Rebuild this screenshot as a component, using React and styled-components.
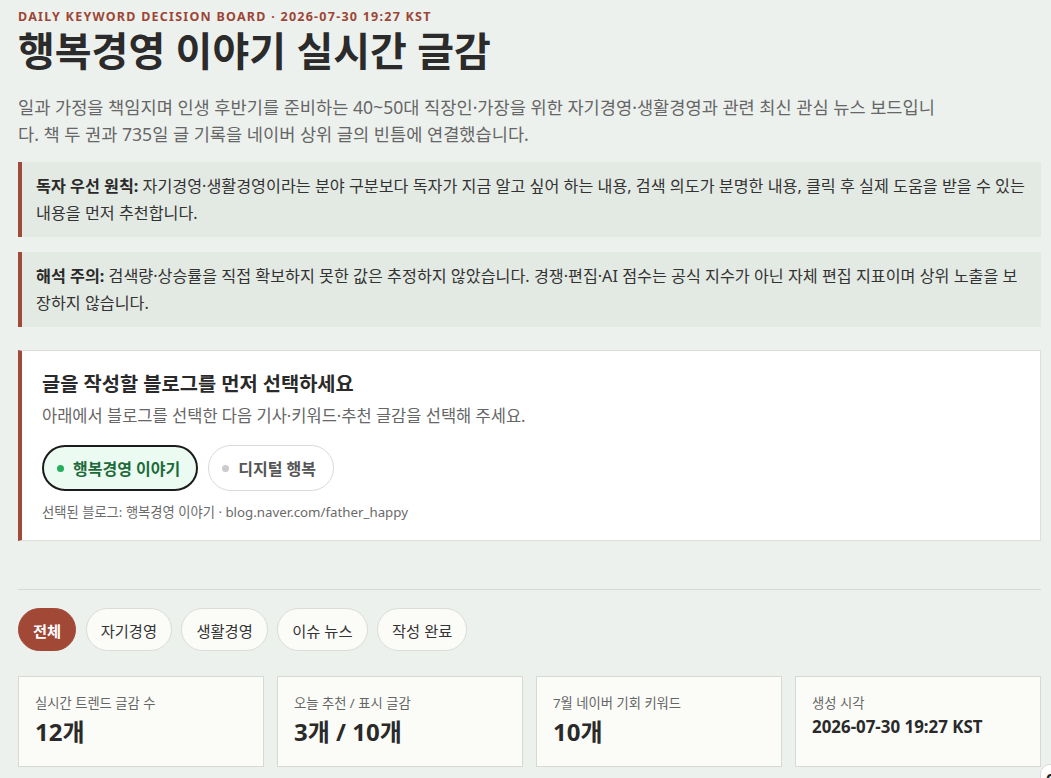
import React from "react";
import styled, { createGlobalStyle } from "styled-components";

const Global = createGlobalStyle`
  html, body { margin: 0; padding: 0; background: #edf1ee; }
  body {
    font-family: "Noto Sans", "Noto Sans CJK KR", sans-serif;
    color: #2a2a2a;
    overflow: hidden;
  }
  * { box-sizing: border-box; }
`;

const Page = styled.main`
  padding: 8px 10px 0 18px;
  display: flex;
  flex-direction: column;
`;

const Eyebrow = styled.div`
  font-size: 12.5px;
  font-weight: 700;
  letter-spacing: 0.1em;
  color: #9c4636;
  line-height: 18px;
`;

const Title = styled.h1`
  margin: 0;
  font-size: 40px;
  font-weight: 700;
  line-height: 50px;
  color: #2b2b2b;
`;

const Lead = styled.p`
  margin: 18px 0 0;
  max-width: 920px;
  font-size: 17.6px;
  line-height: 27px;
  color: #666;
`;

const Notes = styled.div`
  display: flex;
  flex-direction: column;
  gap: 15px;
  margin-top: 14px;
`;

const Callout = styled.div`
  background: #e3e9e3;
  border-left: 4px solid #a04a3a;
  padding: 11px 14px 11px 14px;
  font-size: 16.2px;
  line-height: 26.5px;
  color: #333;
  strong { font-weight: 700; color: #2a2a2a; }
`;

const SelectCard = styled.section`
  margin-top: 23px;
  background: #fff;
  border: 1px solid #dcdfdb;
  border-left: 4px solid #a04a3a;
  padding: 19px 22px 18px 20px;
`;

const CardTitle = styled.h2`
  margin: 0;
  font-size: 19.8px;
  font-weight: 700;
  line-height: 28px;
  color: #2a2a2a;
`;

const CardSub = styled.p`
  margin: 7px 0 0;
  font-size: 16.5px;
  line-height: 22px;
  color: #666;
`;

const BlogRow = styled.div`
  display: flex;
  gap: 10px;
  margin-top: 18px;
`;

const BlogChip = styled.button`
  display: inline-flex;
  align-items: center;
  gap: 9px;
  height: 46px;
  padding: ${(p) => (p.$active ? "0 16px 0 13px" : "0 17px 0 13px")};
  border-radius: 23px;
  font-family: inherit;
  font-size: 16px;
  font-weight: 700;
  cursor: pointer;
  background: ${(p) => (p.$active ? "#ebfbf2" : "#fff")};
  border: ${(p) => (p.$active ? "2px solid #1b1b1b" : "1px solid #d9d9d9")};
  color: ${(p) => (p.$active ? "#1f6a3b" : "#555")};
`;

const Dot = styled.span`
  width: 7px;
  height: 7px;
  border-radius: 50%;
  background: ${(p) => (p.$active ? "#22b05c" : "#cbcbcb")};
`;

const Foot = styled.p`
  margin: 11px 0 0;
  font-size: 13.3px;
  line-height: 20px;
  color: #6a6a6a;
`;

const Divider = styled.hr`
  margin: 48px 0 0;
  border: 0;
  border-top: 1px solid #d6dad6;
`;

const Filters = styled.div`
  display: flex;
  gap: 9.5px;
  margin-top: 18px;
`;

const FilterChip = styled.button`
  height: 43px;
  padding: 0 14px;
  border-radius: 22px;
  font-family: inherit;
  font-size: 15.3px;
  font-weight: ${(p) => (p.$active ? 700 : 400)};
  cursor: pointer;
  background: ${(p) => (p.$active ? "#a24836" : "#fbfcf8")};
  color: ${(p) => (p.$active ? "#fff" : "#333")};
  border: 1px solid ${(p) => (p.$active ? "#a24836" : "#d9dcd7")};
`;

const Stats = styled.div`
  display: grid;
  grid-template-columns: repeat(4, 1fr);
  gap: 13px;
  margin-top: 25px;
`;

const Stat = styled.div`
  background: #fbfcf8;
  border: 1px solid #d6d9d4;
  height: 91px;
  padding: 16px 16px;
`;

const StatLabel = styled.div`
  font-size: 13.3px;
  line-height: 20px;
  color: #666;
`;

const StatValue = styled.div`
  margin-top: ${(p) => (p.$small ? "2px" : "3px")};
  font-size: ${(p) => (p.$small ? "16.9px" : "24px")};
  font-weight: 700;
  line-height: ${(p) => (p.$small ? "24px" : "32px")};
  color: #2a2a2a;
`;

const Floating = styled.div`
  position: fixed;
  left: 1040px;
  top: 764px;
  width: 60px;
  height: 40px;
  background: #fff;
  border: 1px solid #d8d8d8;
  border-radius: 10px 0 0 0;
  padding: 4px 0 0 5px;
  font-size: 16px;
  font-weight: 700;
  color: #222;
`;

const stats = [
  { label: "실시간 트렌드 글감 수", value: "12개" },
  { label: "오늘 추천 / 표시 글감", value: "3개 / 10개" },
  { label: "7월 네이버 기회 키워드", value: "10개" },
  { label: "생성 시각", value: "2026-07-30 19:27 KST", small: true },
];

const filters = ["전체", "자기경영", "생활경영", "이슈 뉴스", "작성 완료"];

export default function App() {
  return (
    <>
      <Global />
      <Page>
        <Eyebrow>DAILY KEYWORD DECISION BOARD · 2026-07-30 19:27 KST</Eyebrow>
        <Title>행복경영 이야기 실시간 글감</Title>
        <Lead>
          일과 가정을 책임지며 인생 후반기를 준비하는 40~50대 직장인·가장을 위한 자기경영·생활경영과 관련 최신 관심 뉴스 보드입니다. 책 두 권과 735일 글 기록을 네이버 상위 글의 빈틈에 연결했습니다.
        </Lead>
        <Notes>
          <Callout>
            <strong>독자 우선 원칙:</strong> 자기경영·생활경영이라는 분야 구분보다 독자가 지금 알고 싶어 하는 내용, 검색 의도가 분명한 내용, 클릭 후 실제 도움을 받을 수 있는 내용을 먼저 추천합니다.
          </Callout>
          <Callout>
            <strong>해석 주의:</strong> 검색량·상승률을 직접 확보하지 못한 값은 추정하지 않았습니다. 경쟁·편집·AI 점수는 공식 지수가 아닌 자체 편집 지표이며 상위 노출을 보장하지 않습니다.
          </Callout>
        </Notes>
        <SelectCard>
          <CardTitle>글을 작성할 블로그를 먼저 선택하세요</CardTitle>
          <CardSub>아래에서 블로그를 선택한 다음 기사·키워드·추천 글감을 선택해 주세요.</CardSub>
          <BlogRow>
            <BlogChip $active>
              <Dot $active />
              행복경영 이야기
            </BlogChip>
            <BlogChip>
              <Dot />
              디지털 행복
            </BlogChip>
          </BlogRow>
          <Foot>선택된 블로그: 행복경영 이야기 · blog.naver.com/father_happy</Foot>
        </SelectCard>
        <Divider />
        <Filters>
          {filters.map((f, i) => (
            <FilterChip key={f} $active={i === 0}>
              {f}
            </FilterChip>
          ))}
        </Filters>
        <Stats>
          {stats.map((s) => (
            <Stat key={s.label}>
              <StatLabel>{s.label}</StatLabel>
              <StatValue $small={s.small}>{s.value}</StatValue>
            </Stat>
          ))}
        </Stats>
      </Page>
      <Floating>0</Floating>
    </>
  );
}
